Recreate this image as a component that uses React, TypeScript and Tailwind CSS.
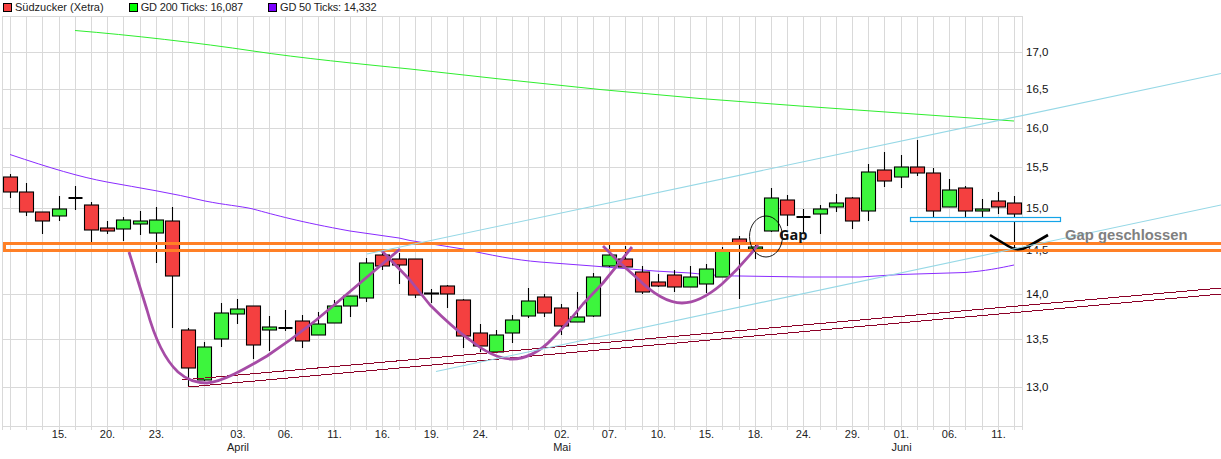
// x, wick high, wick low, body top, body bottom, colour
type Candle = [number, number, number, number, number, "r" | "g"]

const candles: Candle[] = [
  [10.5, 174, 198, 177, 192, "r"],
  [26.5, 183, 216, 192, 212, "r"],
  [42.5, 212, 234, 212, 221, "r"],
  [59.5, 196, 221, 209, 216, "g"],
  [75.5, 186, 210, 198, 198, "g"],
  [91.5, 202, 242, 205, 230, "r"],
  [107.5, 221, 234, 228, 231, "r"],
  [123.5, 217, 241, 220, 229, "g"],
  [140.5, 211, 235, 221, 224, "g"],
  [156.5, 207, 263, 220, 233, "g"],
  [172.5, 207, 328, 221, 276, "r"],
  [188.5, 328, 386, 330, 368, "r"],
  [204.5, 342, 381, 347, 380, "g"],
  [221.5, 303, 347, 313, 339, "g"],
  [237.5, 299, 324, 309, 314, "g"],
  [253.5, 306, 359, 306, 345, "r"],
  [269.5, 316, 351, 327, 330, "g"],
  [285.5, 310, 331, 328, 328, "g"],
  [302.5, 315, 348, 321, 341, "r"],
  [318.5, 312, 335, 324, 335, "g"],
  [334.5, 300, 323, 306, 323, "g"],
  [350.5, 296, 317, 296, 306, "g"],
  [366.5, 258, 302, 263, 298, "g"],
  [382.5, 253, 270, 255, 266, "r"],
  [399.5, 253, 284, 259, 265, "r"],
  [415.5, 259, 298, 259, 295, "r"],
  [431.5, 289, 303, 293, 294, "g"],
  [447.5, 285, 308, 286, 294, "r"],
  [463.5, 299, 348, 300, 336, "r"],
  [480.5, 324, 352, 333, 346, "r"],
  [496.5, 330, 352, 335, 352, "g"],
  [512.5, 315, 343, 320, 333, "g"],
  [528.5, 288, 318, 301, 316, "g"],
  [544.5, 294, 317, 297, 313, "r"],
  [561.5, 304, 335, 308, 326, "r"],
  [577.5, 292, 322, 317, 322, "g"],
  [593.5, 273, 317, 277, 316, "g"],
  [609.5, 245, 267, 255, 266, "g"],
  [625.5, 246, 267, 259, 267, "r"],
  [642.5, 266, 294, 272, 292, "r"],
  [658.5, 274, 287, 282, 286, "r"],
  [674.5, 270, 292, 275, 287, "r"],
  [690.5, 266, 287, 277, 287, "g"],
  [706.5, 264, 293, 269, 284, "g"],
  [722.5, 247, 277, 250, 277, "g"],
  [739.5, 236, 299, 239, 243, "r"],
  [755.5, 242, 259, 247, 249, "g"],
  [771.5, 188, 232, 198, 231, "g"],
  [787.5, 195, 226, 200, 215, "r"],
  [803.5, 209, 233, 217, 217, "g"],
  [820.5, 205, 234, 209, 214, "g"],
  [836.5, 194, 212, 203, 207, "g"],
  [852.5, 197, 229, 198, 221, "r"],
  [868.5, 164, 221, 172, 211, "g"],
  [884.5, 152, 187, 170, 181, "r"],
  [901.5, 155, 188, 167, 177, "g"],
  [917.5, 140, 176, 167, 173, "r"],
  [933.5, 168, 218, 173, 211, "r"],
  [949.5, 179, 207, 190, 207, "g"],
  [965.5, 186, 221, 188, 211, "r"],
  [982.5, 199, 221, 209, 211, "g"],
  [998.5, 192, 214, 201, 207, "r"],
  [1014.5, 196, 250, 203, 214, "r"],
]

const gridX = [
  2.5, 10.5, 26.5, 42.5, 59.5, 75.5, 91.5, 107.5, 123.5, 140.5, 156.5, 172.5, 188.5, 204.5, 221.5, 237.5,
  253.5, 269.5, 285.5, 302.5, 318.5, 334.5, 350.5, 366.5, 382.5, 399.5, 415.5, 431.5, 447.5, 463.5, 480.5,
  496.5, 512.5, 528.5, 544.5, 561.5, 577.5, 593.5, 609.5, 625.5, 642.5, 658.5, 674.5, 690.5, 706.5, 722.5,
  739.5, 755.5, 771.5, 787.5, 803.5, 820.5, 836.5, 852.5, 868.5, 884.5, 901.5, 917.5, 933.5, 949.5, 965.5,
  982.5, 998.5, 1014.5, 1022.5,
]

const gridY = [16.5, 52.5, 89.5, 128.5, 167.5, 208.5, 250.5, 294.5, 339.5, 387.5, 426.5]

const priceLabels: [string, number][] = [
  ["17,0", 52.5],
  ["16,5", 89.5],
  ["16,0", 128.5],
  ["15,5", 167.5],
  ["15,0", 208.5],
  ["14,5", 250.5],
  ["14,0", 294.5],
  ["13,5", 339.5],
  ["13,0", 387.5],
]

const dayLabels: [string, number][] = [
  ["15.", 59.5],
  ["20.", 107.5],
  ["23.", 156.5],
  ["03.", 238],
  ["06.", 285.5],
  ["11.", 334.5],
  ["16.", 382.5],
  ["19.", 431.5],
  ["24.", 480.5],
  ["02.", 562],
  ["07.", 609.5],
  ["10.", 658.5],
  ["15.", 706.5],
  ["18.", 755.5],
  ["24.", 803.5],
  ["29.", 852.5],
  ["01.", 901.5],
  ["06.", 949.5],
  ["11.", 998.5],
]

const monthLabels: [string, number][] = [
  ["April", 238],
  ["Mai", 562],
  ["Juni", 901.5],
]

const gd200 = "M75 30.5 C130 35 200 43 253 51 C300 58 360 64 410 69 L500 79 L600 89.5 L700 98.5 L800 106 L900 113 L1014 121"
const gd50 =
  "M10 154.5 C50 168 80 177 107 182 C140 188 172 193 205 201 C225 205 240 206 253 209 C275 215 300 222 350 231 L399 238 L410 240.5 L463 249 C490 255 515 260 540 262 L593 266 L655 271 L690 273 C710 275 725 276 740 276 L803 277 L860 277 L900 274.5 L965 272.5 C985 271 1000 268 1014 265"

const curves = [
  "M129 252 L147 310 C153 332 162 357 178 372 C187 380 197 383 207 383 C222 382 245 369 267 356 C285 344 300 333 315 321 L333 306 L400 249",
  "M382 251 L410 280 L430 305 C445 320 460 333 470 340 C485 352 500 359 512 359 C525 359 540 352 552 339 C565 326 575 314 583 304 L603 283 L632 247",
  "M603 246 L620 263 L637 278 C650 291 665 303 682 303 C695 303 708 296 722 284 C735 272 748 258 758 245",
]

const Swatch = ({ color }: { color: string }) => <span className={`h-[9px] w-[9px] border border-black ${color}`} />

const Legend = () => (
  <div className="flex h-[16px] items-start gap-[25px] pt-[1px] pl-[3px] font-['Liberation_Sans',sans-serif] text-[11px] leading-[13px] text-[#222]">
    <div className="flex items-center gap-[3px]">
      <Swatch color="bg-[#f84040]" />
      <span>Südzucker (Xetra)</span>
    </div>
    <div className="flex items-center gap-[3px]">
      <Swatch color="bg-[#00ff00]" />
      <span className="tracking-[-0.17px]">GD 200 Ticks: 16,087</span>
    </div>
    <div className="flex items-center gap-[3px]">
      <Swatch color="bg-[#7b00ff]" />
      <span className="tracking-[-0.17px]">GD 50 Ticks: 14,332</span>
    </div>
  </div>
)

const Chart = () => (
  <svg width={1221} height={443} viewBox="0 16 1221 443" className="block font-['Liberation_Sans',sans-serif]">
    {gridX.map((x) => (
      <line key={x} x1={x} x2={x} y1={16} y2={430} stroke="#d9d9d9" />
    ))}
    {gridY.map((y) => (
      <line key={y} x1={2} x2={1023} y1={y} y2={y} stroke="#d9d9d9" />
    ))}

    {priceLabels.map(([t, y]) => (
      <text key={t} x={1026} y={y + 3} fontSize={11.5} fill="#111">
        {t}
      </text>
    ))}
    {dayLabels.map(([t, x], i) => (
      <text key={i} x={x} y={438} fontSize={11} fill="#222" textAnchor="middle">
        {t}
      </text>
    ))}
    {monthLabels.map(([t, x]) => (
      <text key={t} x={x} y={451} fontSize={11} fill="#222" textAnchor="middle">
        {t}
      </text>
    ))}

    <path d={gd200} fill="none" stroke="#2fee2f" />
    <path d={gd50} fill="none" stroke="#8a2bff" />

    {candles.map(([x, hi, lo, top, bottom, c]) => (
      <g key={x}>
        <line x1={x} x2={x} y1={hi} y2={lo} stroke="#000" strokeWidth={1.1} />
        {top === bottom ? (
          <line x1={x - 7} x2={x + 7} y1={top} y2={top} stroke="#000" strokeWidth={2} />
        ) : (
          <rect
            x={x - 7}
            y={top}
            width={14}
            height={bottom - top}
            fill={c === "r" ? "#f44040" : "#3df53d"}
            stroke="#000"
            strokeWidth={1.1}
          />
        )}
      </g>
    ))}

    <path d="M182 380 L1221 288" fill="none" stroke="#8b0026" shapeRendering="crispEdges" />
    <path d="M188 387 L1221 294" fill="none" stroke="#8b0026" shapeRendering="crispEdges" />

    <rect x={4.5} y={243.5} width={1220} height={7} fill="none" stroke="#ff8026" strokeWidth={3} />

    <path d="M990 235 L1008 246 C1014 250 1022 250 1029 246 L1048 235" fill="none" stroke="#000" strokeWidth={2.6} />

    {curves.map((d) => (
      <path key={d} d={d} fill="none" stroke="#a64ca6" strokeWidth={2.8} strokeLinejoin="round" />
    ))}

    <path d="M367 254 L1221 73.5" fill="none" stroke="#96d8e6" strokeWidth={1.1} />
    <path d="M436 371.5 L1221 205" fill="none" stroke="#96d8e6" strokeWidth={1.1} />

    <ellipse cx={766} cy={236.5} rx={16.5} ry={20.5} fill="none" stroke="#000" strokeWidth={0.9} />
    <rect x={910.5} y={217.5} width={150} height={4} fill="#fff" stroke="#14a4e8" strokeWidth={1.2} />

    <text x={779} y={240} fontSize={14.5} fontWeight={700} fill="#111" className="font-['Open_Sans',sans-serif]">
      Gap
    </text>
    <text x={1065} y={240} fontSize={14.8} fontWeight={700} fill="#808080">
      Gap geschlossen
    </text>
  </svg>
)

const App = () => (
  <div className="h-[459px] w-[1221px] overflow-hidden bg-white">
    <Legend />
    <Chart />
  </div>
)

export default App
